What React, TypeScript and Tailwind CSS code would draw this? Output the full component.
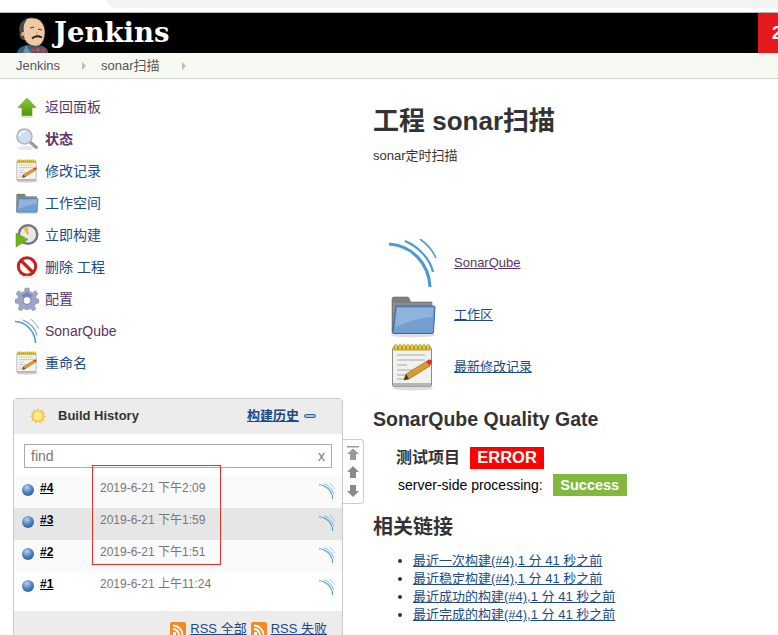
import React from "react";

const Sonar = ({ className }: { className?: string }) => (
  <svg viewBox="0 0 48 48" fill="none" stroke="#4e9bcd" strokeLinecap="butt" className={className}>
    <path d="M0 5C22 6 40 24 41 48" strokeWidth="3.2" />
    <path d="M16 2C30 8 41 20 44 33" strokeWidth="2.2" />
    <path d="M31 0C38 5 44 12 47 19" strokeWidth="1.6" />
  </svg>
);

const UpArrow = () => (
  <svg viewBox="0 0 24 24" className="w-6 h-6">
    <defs><linearGradient id="ua" x1="0" y1="0" x2="0" y2="1"><stop offset="0" stopColor="#8ec63f" /><stop offset="1" stopColor="#4e9a06" /></linearGradient></defs>
    <ellipse cx="12" cy="21.5" rx="7" ry="1.5" fill="#ddd" />
    <path d="M12 3L21 12.5H17V20.5H7V12.5H3Z" fill="url(#ua)" stroke="#5f9e1f" strokeWidth=".6" />
  </svg>
);
const Magnifier = () => (
  <svg viewBox="0 0 24 24" className="w-6 h-6">
    <ellipse cx="11" cy="21" rx="9" ry="2" fill="#e9e9e9" />
    <path d="M15 15L21.5 20.5" stroke="#9a9a9a" strokeWidth="3" strokeLinecap="round" />
    <circle cx="9.5" cy="9.5" r="7.5" fill="#cfdff0" stroke="#b4b4b4" strokeWidth="1.6" />
    <path d="M4.5 9A5.5 5 0 0 1 10 4.5" stroke="#fff" strokeWidth="1.5" fill="none" />
  </svg>
);
const Notepad = ({ className }: { className?: string }) => (
  <svg viewBox="0 0 48 48" className={className}>
    <ellipse cx="24" cy="45" rx="20" ry="2.5" fill="#ddd" />
    <rect x="3.5" y="4.5" width="39" height="39" rx="1.5" fill="#f1f1ef" stroke="#8a8a8a" />
    <rect x="4" y="40" width="38" height="3.5" fill="#b5b5b5" />
    <rect x="4.5" y="2.5" width="37" height="5" fill="#c9a820" />
    {[6, 10, 14, 18, 22, 26, 30, 34, 38].map((x) => (
      <rect key={x} x={x} y="1" width="2" height="6" rx="1" fill="#f0dc6a" stroke="#8f7712" strokeWidth=".4" />
    ))}
    <path d="M8 12H36M8 17H36M8 22H18M8 27H30M8 32H22M8 36H16" stroke="#a8a8a8" strokeWidth="1" />
    <path d="M15 37L17 31L38 18L41 23L20 36Z" fill="#d99a32" stroke="#8f5f10" strokeWidth=".6" />
    <path d="M15 37L17 31L20 36Z" fill="#3a3a3a" />
    <path d="M37 18.5L40 16.5C42 15.8 44 19 42.5 20.5L40.5 22.5Z" fill="#e02f2f" />
  </svg>
);
const Folder = ({ className }: { className?: string }) => (
  <svg viewBox="0 0 48 48" className={className}>
    <ellipse cx="24" cy="44" rx="22" ry="2.5" fill="#e0e0e0" />
    <path d="M3 8Q3 6 5 6H18Q20 6 20.5 8L21.5 11H43V20H4V42H3Z" fill="#7f7f7f" stroke="#6a6a6a" strokeWidth=".6" />
    <path d="M4 42V12H43V16H8Z" fill="#8e8e8e" />
    <path d="M7 15H45Q46 15 46 16L44.5 41Q44.5 42.5 43 42.5H5Q3.5 42.5 4 41Z" fill="#729fcf" stroke="#3465a4" strokeWidth="1" />
    <path d="M8 17H44L43.3 26C30 27 18 31 6 36Z" fill="#8fb3dc" />
  </svg>
);
const Clock = () => (
  <svg viewBox="0 0 24 24" className="w-6 h-6">
    <circle cx="13" cy="11.5" r="10.5" fill="#77738f" />
    <circle cx="13" cy="11.5" r="8" fill="#e8e8e4" />
    <path d="M13 11.5L8 4.5L12 3.5Z" fill="#f5d327" stroke="#a88f10" strokeWidth=".5" />
    <path d="M1 10L1 24L13 16.5Z" fill="#6fb51a" stroke="#4e8f0a" strokeWidth=".5" />
  </svg>
);
const NoEntry = () => (
  <svg viewBox="0 0 24 24" className="w-6 h-6">
    <circle cx="12" cy="11.5" r="8.7" fill="#fff" stroke="#cc1f1f" strokeWidth="3" />
    <path d="M6 5.5L18 17.5" stroke="#cc1f1f" strokeWidth="3.2" />
    <ellipse cx="12" cy="22" rx="7" ry="1.2" fill="#e2e2e2" />
  </svg>
);
const Gear = () => (
  <svg viewBox="0 0 24 24" className="w-6 h-6">
    <path
      d="M10 1H14L14.7 4.5L17.5 5.7L20.5 3.7L23 6.7L20.7 9.5L21.5 11.5L24 12.5V16L20.8 16.5L19.5 19L21 22L18 24L15.5 21.5L13.5 22.5H10.5L8.5 21.5L6 24L3 22L4.5 19L3.2 16.5L0 16V12.5L2.5 11.5L3.3 9.5L1 6.7L3.5 3.7L6.5 5.7L9.3 4.5Z"
      fill="#a0a4cb"
      stroke="#8488ad"
      strokeWidth=".5"
    />
    <path d="M6 9L12 5L18 9L12 11Z" fill="#6a86b8" />
    <circle cx="12" cy="13.5" r="4" fill="#fff" stroke="#7a7ea6" />
  </svg>
);
const Sun = () => (
  <svg viewBox="0 0 16 16" className="w-4 h-4">
    <path d="M8 0L9.5 3L12.5 1.5L12.5 4.5L15.5 4.5L13.5 7L16 8.5L13.5 10L14.5 13L11.5 12.5L10.5 15.5L8 13.5L5.5 15.5L4.5 12.5L1.5 13L2.5 10L0 8.5L2.5 7L.5 4.5L3.5 4.5L3.5 1.5L6.5 3Z" fill="#f9bd5a" />
    <circle cx="8" cy="8" r="4.5" fill="#fdf07a" />
  </svg>
);
const Ball = () => (
  <svg viewBox="0 0 12 12" className="w-3 h-3 shrink-0">
    <defs><radialGradient id="bb" cx=".4" cy=".3" r=".8"><stop offset="0" stopColor="#bcd3ec" /><stop offset=".55" stopColor="#4a7fbd" /><stop offset="1" stopColor="#2a5a97" /></radialGradient></defs>
    <circle cx="6" cy="6" r="6" fill="url(#bb)" />
  </svg>
);
const Rss = () => (
  <svg viewBox="0 0 16 16" className="w-4 h-4 shrink-0">
    <rect width="16" height="16" rx="2" fill="#f08a24" />
    <circle cx="4.5" cy="11.5" r="1.7" fill="#fff" />
    <path d="M3 7A6 6 0 0 1 9 13M3 3.5A9.5 9.5 0 0 1 12.5 13" fill="none" stroke="#fff" strokeWidth="1.8" />
  </svg>
);
const Jenkins = () => (
  <svg viewBox="0 0 32 36" className="w-8 h-9 shrink-0">
    <path d="M0 36C1 31 5 29 10 28L22 28C27 29 31 31 31 36Z" fill="#34607f" />
    <path d="M9 28L14 36H6Z" fill="#e8e8e0" opacity=".35" />
    <path d="M4 10C5 3 11 0 16 1C23 1 28 7 28 15C28 21 26 27 21 29C15 30 10 27 8 23C5 23 2 20 3 16C3 13 4 12 4 10Z" fill="#efc9a6" stroke="#2c2420" strokeWidth=".7" />
    <path d="M3 16C1 11 3 5 7 3L10 2.5C7 6 6 10 7 14C6 15 6 17 7 19L8 23C5 23 3 20 3 16Z" fill="#4a4a4a" />
    <circle cx="6" cy="17" r="2" fill="#e2a98a" />
    <path d="M13 11L17 10M21 12L25 13" stroke="#3a3a3a" strokeWidth="1" />
    <path d="M20 15L20 19" stroke="#c18f6e" strokeWidth=".9" />
    <path d="M15 21.5C18 18.5 22 19 25 20.5" stroke="#222" strokeWidth="1.8" fill="none" />
    <path d="M14 31L20 33L14 36ZM28 31L22 33L28 36Z" fill="#d8352a" />
    <circle cx="21" cy="33" r="1.7" fill="#ee4a3c" />
  </svg>
);

const tasks: { icon: React.ReactNode; label: string; visited?: boolean; bold?: boolean }[] = [
  { icon: <UpArrow />, label: "返回面板", visited: true },
  { icon: <Magnifier />, label: "状态", visited: true, bold: true },
  { icon: <Notepad className="w-6 h-6" />, label: "修改记录" },
  { icon: <Folder className="w-6 h-6" />, label: "工作空间" },
  { icon: <Clock />, label: "立即构建" },
  { icon: <NoEntry />, label: "删除 工程" },
  { icon: <Gear />, label: "配置", visited: true },
  { icon: <Sonar className="w-6 h-6" />, label: "SonarQube", visited: true },
  { icon: <Notepad className="w-6 h-6" />, label: "重命名" },
];

const builds = [
  { n: "#4", d: "2019-6-21 下午2:09", bg: "bg-[#fafafa]" },
  { n: "#3", d: "2019-6-21 下午1:59", bg: "bg-[#e6e6e6]" },
  { n: "#2", d: "2019-6-21 下午1:51", bg: "bg-[#fafafa]" },
  { n: "#1", d: "2019-6-21 上午11:24", bg: "bg-white" },
];

const links = [
  ["最近一次构建(#4),", "1 分 41 秒之前"],
  ["最近稳定构建(#4),", "1 分 41 秒之前"],
  ["最近成功的构建(#4),", "1 分 41 秒之前"],
  ["最近完成的构建(#4),", "1 分 41 秒之前"],
];

const font = "font-['Liberation_Sans','Noto_Sans_CJK_SC',sans-serif]";

export default function App() {
  return (
    <div className={`${font} relative h-[635px] w-[778px] overflow-hidden bg-white text-[#333]`}>
      {/* browser chrome remnant */}
      <div className="h-3 bg-white">
        <div className="ml-[107px] h-2 rounded-bl-[10px] bg-[#f1f3f4]" />
      </div>
      <div className="h-px bg-[#b5b5b5]" />

      {/* header */}
      <div className="flex h-10 items-stretch justify-between overflow-hidden bg-black">
        <div className="flex items-end pl-[17px]">
          <Jenkins />
          <span className="mb-[3px] ml-[5px] font-['DejaVu_Serif',serif] text-[27.5px] leading-[36px] font-bold text-white">Jenkins</span>
        </div>
        <div className="w-5 bg-[#e3191b] pl-[14px] pt-2 text-[18px] leading-6 font-bold text-white">2</div>
      </div>

      {/* breadcrumb */}
      <div className="flex h-[26px] items-center border-b border-[#d3d7cf] bg-[#f6f9f2] pl-4 pt-px text-[13px] text-[#555]">
        <span className="w-[66px]">Jenkins</span>
        <span className="h-0 w-0 border-y-[4px] border-l-[4px] border-y-transparent border-l-[#bbb]" />
        <span className="ml-[15px] w-[81px]">sonar扫描</span>
        <span className="h-0 w-0 border-y-[4px] border-l-[4px] border-y-transparent border-l-[#bbb]" />
      </div>

      <div className="flex">
        {/* side panel */}
        <div className="relative w-[373px] shrink-0 pl-[13px] pt-[12px]">
          <div className="flex flex-col">
            {tasks.map((t) => (
              <div key={t.label} className="flex h-8 items-center">
                <span className="ml-[2px] w-[30px] shrink-0">{t.icon}</span>
                <span className={`text-sm ${t.bold ? "font-bold" : ""} ${t.visited ? "text-[#5c3566]" : "text-[#204a87]"}`}>{t.label}</span>
              </div>
            ))}
          </div>

          {/* build history */}
          <div className="relative mt-[19px] w-[330px] rounded-t border border-[#c8c8c8] bg-white">
            <div className="flex h-[35px] items-center bg-[#ececec] pb-[2px] pl-[16px] pr-[26px]">
              <Sun />
              <span className="ml-3 text-[13px] font-bold text-[#333]">Build History</span>
              <a className="ml-auto text-[13px] font-bold text-[#204a87] underline">构建历史</a>
              <span className="ml-[5px] h-[4px] w-[12px] rounded-sm border border-[#3465a4] bg-[#a9c1e0]" />
            </div>
            <div className="px-[10px] pb-2 pt-[10px]">
              <div className="flex h-6 items-center justify-between border border-[#aaa] px-[6px] pb-px text-sm text-[#777]">
                <span>find</span>
                <span>x</span>
              </div>
            </div>
            {builds.map((b) => (
              <div key={b.n} className={`flex h-8 items-start pl-[8px] pr-[7px] ${b.bg}`}>
                <span className="mt-2"><Ball /></span>
                <a className="ml-[6px] mt-1 w-[60px] text-xs font-bold text-black underline">{b.n}</a>
                <span className="mt-1 text-xs text-[#777]">{b.d}</span>
                <Sonar className="ml-auto mt-[7px] h-4 w-4" />
              </div>
            ))}
            <div className="h-[7px]" />
            <div className="flex h-[40px] justify-end gap-1 bg-[#ececec] pr-[15px] pt-[9px] text-[13px] leading-[18px] text-[#204a87]">
              <span className="flex items-start gap-1"><span className="mt-[2px]"><Rss /></span><a className="underline">RSS 全部</a></span>
              <span className="flex items-start gap-1"><span className="mt-[2px]"><Rss /></span><a className="underline">RSS 失败</a></span>
            </div>

            {/* page scroller */}
            <div className="absolute -right-[22px] top-[40px] flex h-[65px] w-[21px] flex-col items-center justify-around rounded-r border border-l-0 border-[#ccc] bg-white py-[3px]">
              <svg viewBox="0 0 12 14" className="h-[14px] w-3"><path d="M0 0H12V1.5H0ZM6 2.5L12 8H9V14H3V8H0Z" fill="#9a9a9a" /></svg>
              <svg viewBox="0 0 12 12" className="h-3 w-3"><path d="M6 0L12 6H9V12H3V6H0Z" fill="#8a8a8a" /></svg>
              <svg viewBox="0 0 12 12" className="h-3 w-3"><path d="M6 12L12 6H9V0H3V6H0Z" fill="#8a8a8a" /></svg>
            </div>
          </div>
        </div>

        {/* main */}
        <div className="flex-1 pt-[23px]">
          <h1 className="text-[26px] leading-[38px] font-bold text-[#333]">工程 sonar扫描</h1>
          <p className="mt-[7px] text-[13px] leading-[18px] text-[#333]">sonar定时扫描</p>

          <div className="mt-[74px] flex flex-col gap-1 pl-4">
            <div className="flex h-12 items-center"><Sonar className="h-12 w-12" /><a className="ml-[17px] text-[13px] text-[#5c3566] underline">SonarQube</a></div>
            <div className="flex h-12 items-center"><Folder className="h-12 w-12" /><a className="ml-[17px] text-[13px] text-[#204a87] underline">工作区</a></div>
            <div className="flex h-12 items-center"><Notepad className="h-12 w-12" /><a className="ml-[17px] text-[13px] text-[#204a87] underline">最新修改记录</a></div>
          </div>

          <h2 className="mt-[14px] text-[19.5px] leading-[28px] font-bold text-[#333]">SonarQube Quality Gate</h2>
          <div className="mt-[14px] flex h-[22px] items-center pl-[23px]">
            <span className="text-[16px] font-bold text-[#333]">测试项目</span>
            <span className="ml-[10px] flex h-[22px] w-[74px] items-center justify-center bg-[#ff0000] pb-px text-[16.5px] font-bold text-white">ERROR</span>
          </div>
          <div className="mt-[5px] flex h-[22px] items-center pl-[25px]">
            <span className="text-[14px] text-black">server-side processing:</span>
            <span className="ml-[10px] flex h-[22px] w-[74px] items-center justify-center bg-[#83b83f] pt-px text-[14.5px] font-bold text-white">Success</span>
          </div>
          <h2 className="mt-[17px] text-[20px] leading-[28px] font-bold text-[#333]">相关链接</h2>
          <ul className="mt-[11px] list-disc pl-10 text-[13px] leading-[18px] text-[#333]">
            {links.map(([a, b]) => (
              <li key={a}>
                <a className="text-[#204a87] underline">{a}</a>
                <a className="text-[#204a87] underline">{b}</a>
              </li>
            ))}
          </ul>
        </div>
      </div>

      {/* red annotation box */}
      <div className="absolute left-[92px] top-[465px] h-[100px] w-[129px] border border-[#f02d2d]" />
    </div>
  );
}
